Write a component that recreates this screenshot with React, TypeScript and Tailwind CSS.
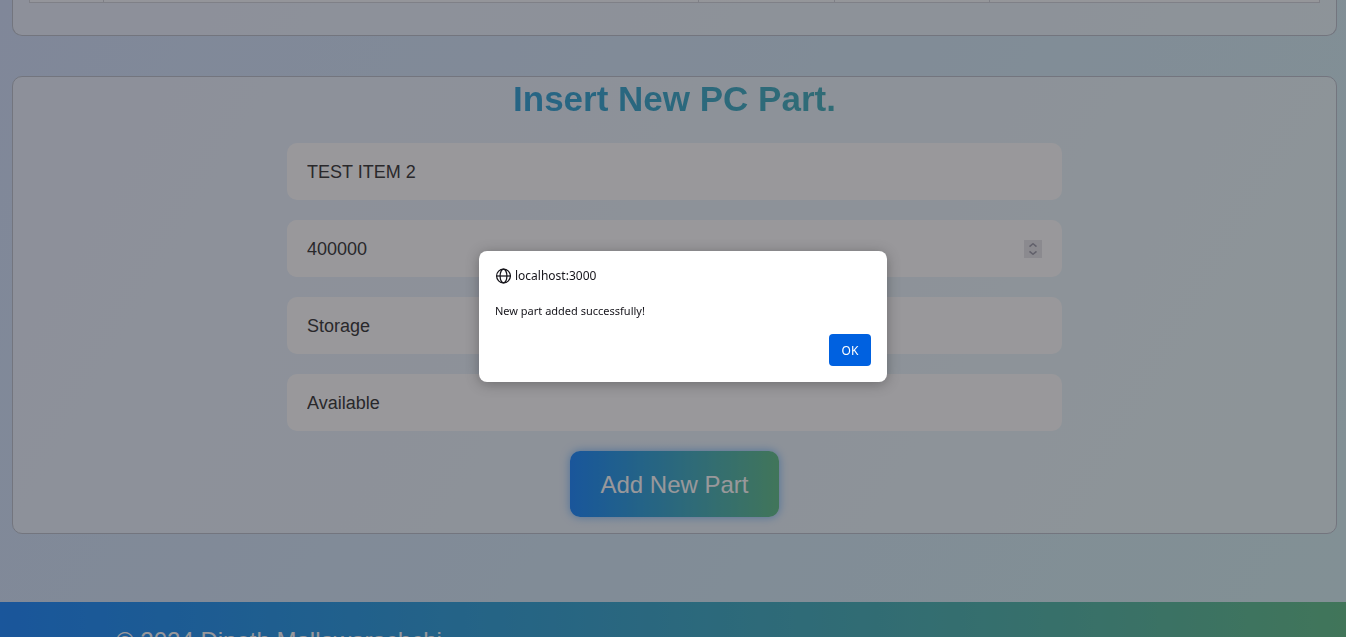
import { useState } from "react";

const field =
  "block h-[57px] w-full appearance-none rounded-[10px] bg-white px-5 text-lg text-[#333333] outline-none";

const columns = ["w-[74px]", "w-[595px]", "w-[136px]", "w-[155px]", ""];

function GlobeIcon() {
  return (
    <svg viewBox="0 0 16 16" className="size-4" fill="none" stroke="#15141a" strokeWidth="1.25" aria-hidden="true">
      <circle cx="8.5" cy="8" r="6.9" />
      <ellipse cx="8.5" cy="8" rx="3.4" ry="6.9" />
      <path d="M1.6 8h13.8" />
    </svg>
  );
}

function Stepper() {
  return (
    <span className="flex h-[18px] w-[18px] items-center justify-center bg-[#e6e6ea]">
      <svg viewBox="0 0 18 18" className="size-[18px]" fill="none" stroke="#9b9ba8" strokeWidth="1.6" aria-hidden="true">
        <path d="M5.5 6.7 9 3.7 12.5 6.7M5.5 11.3 9 14.3 12.5 11.3" />
      </svg>
    </span>
  );
}

export default function App() {
  const [open, setOpen] = useState(true);
  const [name, setName] = useState("TEST ITEM 2");
  const [price, setPrice] = useState("400000");

  return (
    <div className="h-screen overflow-hidden bg-linear-120 from-[#d2e1fc] to-[#d5f1f4] font-['Liberation_Sans',Arial,sans-serif]">
      <main className="flex flex-col gap-10 pr-[9px] pb-[68px] pl-3">
        <section className="rounded-b-[10px] border border-t-0 border-[#bac0cb] bg-white/50 px-4 pb-8">
          <table className="h-[3px] w-full table-fixed border-collapse bg-white/60">
            <tbody>
              <tr>
                {columns.map((width, i) => (
                  <td key={i} className={`${width} border border-t-0 border-[#d0d3da] p-0`} />
                ))}
              </tr>
            </tbody>
          </table>
        </section>

        <section className="rounded-[10px] border border-[#bac0cb] bg-white/50 pb-4">
          <h2 className="bg-linear-to-r from-[#1887ff] to-[#5fc088] bg-clip-text text-center text-[35px] leading-[44px] font-bold text-transparent">
            Insert New PC Part.
          </h2>
          <form
            className="mx-auto mt-[22px] flex w-[775px] max-w-full flex-col gap-5"
            onSubmit={(e) => {
              e.preventDefault();
              setOpen(true);
            }}
          >
            <input
              aria-label="Part name"
              className={`${field} pt-0.5`}
              value={name}
              onChange={(e) => setName(e.target.value)}
            />
            <div className="flex items-center rounded-[10px] bg-white pr-5">
              <input
                aria-label="Price"
                inputMode="numeric"
                className={`${field} pt-0.5`}
                value={price}
                onChange={(e) => setPrice(e.target.value)}
              />
              <Stepper />
            </div>
            <select aria-label="Category" className={field} defaultValue="Storage">
              <option>Storage</option>
            </select>
            <select aria-label="Availability" className={field} defaultValue="Available">
              <option>Available</option>
            </select>
            <button
              type="submit"
              className="h-[66px] self-center rounded-[10px] bg-linear-to-r from-[#1887ff] to-[#5fc088] px-[30px] pt-0.5 text-2xl text-white shadow-[0_0_10px_rgba(0,123,255,0.5)]"
            >
              Add New Part
            </button>
          </form>
        </section>
      </main>

      <footer className="bg-linear-to-r from-[#1887ff] to-[#5fc088] px-[116px] pt-[23px] pb-10 text-2xl text-white">
        <p>© 2024 Dinoth Mallawarachchi</p>
      </footer>

      {open && (
        <div className="fixed inset-0 bg-[#1c1b22]/45">
          <div
            role="alertdialog"
            aria-labelledby="dialog-origin"
            aria-describedby="dialog-message"
            className="absolute top-[251px] left-[479px] flex w-[408px] flex-col rounded-lg bg-white px-4 pt-[17px] pb-4 font-['Noto_Sans','Open_Sans',sans-serif] text-xs text-[#15141a] shadow-[0_2px_14px_rgba(0,0,0,0.3)]"
          >
            <div className="flex items-center gap-1">
              <GlobeIcon />
              <h1 id="dialog-origin">localhost:3000</h1>
            </div>
            <p id="dialog-message" className="mt-[19px] text-[11px] leading-4">
              New part added successfully!
            </p>
            <button
              type="button"
              onClick={() => setOpen(false)}
              className="mt-[15px] h-8 w-[42px] self-end rounded bg-[#0061e0] pt-0.5 text-white"
            >
              OK
            </button>
          </div>
        </div>
      )}
    </div>
  );
}
